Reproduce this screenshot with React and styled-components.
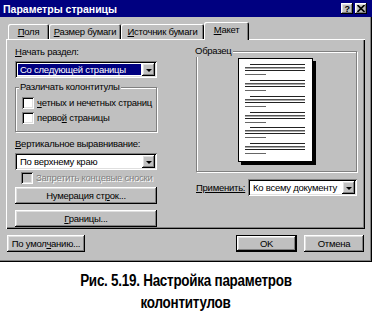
import styled, { createGlobalStyle } from "styled-components";

const GlobalStyle = createGlobalStyle`
  html, body { margin: 0; padding: 0; background: #fff; }
  body { font-family: "Liberation Sans", Arial, sans-serif; }
`;

const raised = `
  box-shadow: inset -1px -1px 0 #000, inset 1px 1px 0 #fff,
    inset -2px -2px 0 #808080, inset 2px 2px 0 #dfdfdf;
`;
const sunken = `
  box-shadow: inset 1px 1px 0 #808080, inset -1px -1px 0 #fff,
    inset 2px 2px 0 #000, inset -2px -2px 0 #dfdfdf;
`;

const Dialog = styled.div`
  width: 372px;
  height: 262px;
  box-sizing: border-box;
  background: #c0c0c0;
  display: flex;
  flex-direction: column;
  box-shadow: inset -1px -1px 0 #000, inset -2px -2px 0 #808080;
  font-size: 9.5px;
  letter-spacing: -0.25px;
  color: #000;
`;

const TitleBar = styled.div`
  height: 17px;
  background: #000080;
  color: #fff;
  display: flex;
  align-items: center;
  padding: 0 5px 0 3px;
  font-weight: bold;
`;

const TitleText = styled.span`
  flex: 1;
  font-size: 10.5px;
  letter-spacing: 0;
`;

const TitleButton = styled.div`
  width: 12px;
  height: 11px;
  margin-left: 2px;
  background: #c0c0c0;
  color: #000;
  display: flex;
  align-items: center;
  justify-content: center;
  font-size: 9px;
  font-weight: bold;
  ${raised}
`;

const Body = styled.div`
  flex: 1;
  display: flex;
  flex-direction: column;
  padding: 5px 7px 0 6px;
`;

const TabRow = styled.div`
  display: flex;
  align-items: flex-end;
  height: 17px;
  padding-left: 2px;
  position: relative;
  z-index: 1;
`;

const Tab = styled.div`
  width: ${(p) => p.$w}px;
  height: ${(p) => (p.$active ? 18 : 15)}px;
  margin-bottom: ${(p) => (p.$active ? -1 : 0)}px;
  box-sizing: border-box;
  background: #c0c0c0;
  display: flex;
  align-items: center;
  justify-content: center;
  padding-bottom: ${(p) => (p.$active ? 3 : 1)}px;
  border-radius: 2px 2px 0 0;
  box-shadow: inset 1px 1px 0 #fff, inset -1px 0 0 #000, inset -2px 0 0 #808080;
`;

const Panel = styled.div`
  height: 190px;
  box-sizing: border-box;
  display: flex;
  gap: 39px;
  padding: 7px 8px 0 9px;
  box-shadow: inset 1px 1px 0 #fff, inset -1px -1px 0 #000,
    inset -2px -2px 0 #808080;
`;

const LeftCol = styled.div`
  width: 142px;
  display: flex;
  flex-direction: column;
`;

const RightCol = styled.div`
  width: 161px;
  display: flex;
  flex-direction: column;
  margin-top: -1px;
`;

const Label = styled.div`
  line-height: 12px;
  height: 12px;
  margin-top: ${(p) => p.$mt || 0}px;
  white-space: nowrap;
`;

const Combo = styled.div`
  height: 17px;
  box-sizing: border-box;
  margin-top: ${(p) => p.$mt || 0}px;
  background: #fff;
  display: flex;
  padding: 2px;
  flex: ${(p) => (p.$grow ? 1 : "none")};
  min-width: 0;
  ${sunken}
`;

const ComboText = styled.div`
  flex: 1;
  margin: 1px;
  padding-left: 2px;
  line-height: 11px;
  white-space: nowrap;
  overflow: hidden;
  background: ${(p) => (p.$selected ? "#000080" : "transparent")};
  color: ${(p) => (p.$selected ? "#fff" : "#000")};
`;

const ComboButton = styled.div`
  width: 13px;
  flex: none;
  background: #c0c0c0;
  display: flex;
  align-items: center;
  justify-content: center;
  ${raised}
`;

const Arrow = styled.div`
  width: 0;
  height: 0;
  border-left: 3px solid transparent;
  border-right: 3px solid transparent;
  border-top: 3px solid #000;
  margin-top: 1px;
`;

const Group = styled.fieldset`
  margin: ${(p) => p.$mt || 0}px 0 0;
  padding: ${(p) => p.$pad};
  min-width: 0;
  border: 1px solid #808080;
  box-shadow: inset 1px 1px 0 #fff, 1px 1px 0 #fff;
  display: flex;
  flex-direction: column;
  align-items: ${(p) => p.$align || "stretch"};
`;

const Legend = styled.legend`
  padding: 0 1px;
  margin-left: -3px;
  line-height: 12px;
  background: #c0c0c0;
`;

const CheckRow = styled.div`
  height: 15px;
  display: flex;
  align-items: center;
  gap: 3px;
  white-space: nowrap;
  margin-left: ${(p) => p.$ml || 0}px;
  color: ${(p) => (p.$disabled ? "#808080" : "#000")};
  text-shadow: ${(p) => (p.$disabled ? "1px 1px 0 #fff" : "none")};
`;

const Check = styled.div`
  width: 12px;
  height: 12px;
  flex: none;
  background: ${(p) => (p.$disabled ? "#c0c0c0" : "#fff")};
  ${sunken}
`;

const Button = styled.div`
  width: ${(p) => (p.$w ? `${p.$w}px` : "auto")};
  height: ${(p) => p.$h || 17}px;
  margin-top: ${(p) => p.$mt || 0}px;
  margin-left: ${(p) => p.$ml || 0}px;
  box-sizing: border-box;
  background: #c0c0c0;
  display: flex;
  align-items: center;
  justify-content: center;
  white-space: nowrap;
  ${(p) =>
    p.$default
      ? `box-shadow: inset 0 0 0 1px #000, inset -2px -2px 0 #000, inset 2px 2px 0 #fff,
          inset -3px -3px 0 #808080, inset 3px 3px 0 #dfdfdf;`
      : raised}
`;

const ApplyRow = styled.div`
  display: flex;
  align-items: center;
  margin-top: 7px;
`;

const ApplyLabel = styled.div`
  width: 52px;
  flex: none;
`;

const Footer = styled.div`
  display: flex;
  margin: 6px 1px 0 1px;
`;

const FooterRight = styled.div`
  display: flex;
  gap: 7px;
  margin-left: auto;
`;

const Caption = styled.div`
  margin-top: 8px;
  width: 372px;
  display: flex;
  flex-direction: column;
  align-items: center;
  font-weight: bold;
  font-size: 16px;
  line-height: 22px;
  letter-spacing: -0.3px;
  color: #000;
`;

const CaptionLine = styled.div`
  white-space: nowrap;
  transform: scaleX(0.84);
`;

const paragraphs = [6, 22, 38, 54, 69, 85];

function PagePreview() {
  return (
    <svg width="78" height="107" viewBox="0 0 78 107">
      <rect x="3" y="3" width="75" height="104" fill="#000" />
      <rect x="0.5" y="0.5" width="74" height="103" fill="#fff" stroke="#000" />
      {paragraphs.map((y) => (
        <g key={y}>
          <rect x="12" y={y} width="55" height="1" fill="#222" />
          <rect x="7" y={y + 3} width="60" height="1" fill="#555" />
          <rect x="7" y={y + 4} width="60" height="1" fill="#aaa" />
          <rect x="7" y={y + 6} width="60" height="1" fill="#222" />
          <rect x="7" y={y + 10} width="21" height="1" fill="#666" />
        </g>
      ))}
    </svg>
  );
}

function CloseGlyph() {
  return (
    <svg width="8" height="7" viewBox="0 0 8 7">
      <path d="M0.5 0 L7.5 7 M7.5 0 L0.5 7" stroke="#000" strokeWidth="1.6" />
    </svg>
  );
}

function ComboBox({ value, selected, mt, grow }) {
  return (
    <Combo $mt={mt} $grow={grow}>
      <ComboText $selected={selected}>{value}</ComboText>
      <ComboButton>
        <Arrow />
      </ComboButton>
    </Combo>
  );
}

export default function App() {
  return (
    <>
      <GlobalStyle />
      <Dialog>
        <TitleBar>
          <TitleText>Параметры страницы</TitleText>
          <TitleButton>?</TitleButton>
          <TitleButton>
            <CloseGlyph />
          </TitleButton>
        </TitleBar>
        <Body>
          <TabRow>
            <Tab $w={41}>
              <span><u>П</u>оля</span>
            </Tab>
            <Tab $w={72}>
              <span><u>Р</u>азмер бумаги</span>
            </Tab>
            <Tab $w={83}>
              <span><u>И</u>сточник бумаги</span>
            </Tab>
            <Tab $w={45} $active>
              <span><u>М</u>акет</span>
            </Tab>
          </TabRow>
          <Panel>
            <LeftCol>
              <Label>
                <u>Н</u>ачать раздел:
              </Label>
              <ComboBox value="Со следующей страницы" selected mt={3} />
              <Group $mt={3} $pad="2px 6px 6px 6px">
                <Legend>Различать колонтитулы</Legend>
                <CheckRow>
                  <Check />
                  <span><u>ч</u>етных и нечетных страниц</span>
                </CheckRow>
                <CheckRow>
                  <Check />
                  <span>перво<u>й</u> страницы</span>
                </CheckRow>
              </Group>
              <Label $mt={6}>
                <u>В</u>ертикальное выравнивание:
              </Label>
              <ComboBox value="По верхнему краю" mt={3} />
              <CheckRow $disabled $ml={6}>
                <Check $disabled />
                <span>Запретить концевые сноски</span>
              </CheckRow>
              <Button $mt={2}>
                <span>Нумерация ст<u>р</u>ок...</span>
              </Button>
              <Button $mt={6}>
                <span><u>Г</u>раницы...</span>
              </Button>
            </LeftCol>
            <RightCol>
              <Group $pad="1px 0 6px 0" $align="center">
                <Legend>Образец</Legend>
                <PagePreview />
              </Group>
              <ApplyRow>
                <ApplyLabel>
                  <u>Применить:</u>
                </ApplyLabel>
                <ComboBox value="Ко всему документу" grow />
              </ApplyRow>
            </RightCol>
          </Panel>
          <Footer>
            <Button $w={78}>
              <span>По умол<u>ч</u>анию...</span>
            </Button>
            <FooterRight>
              <Button $w={61} $default>
                OK
              </Button>
              <Button $w={60}>Отмена</Button>
            </FooterRight>
          </Footer>
        </Body>
      </Dialog>
      <Caption>
        <CaptionLine>Рис. 5.19. Настройка параметров</CaptionLine>
        <CaptionLine>колонтитулов</CaptionLine>
      </Caption>
    </>
  );
}
